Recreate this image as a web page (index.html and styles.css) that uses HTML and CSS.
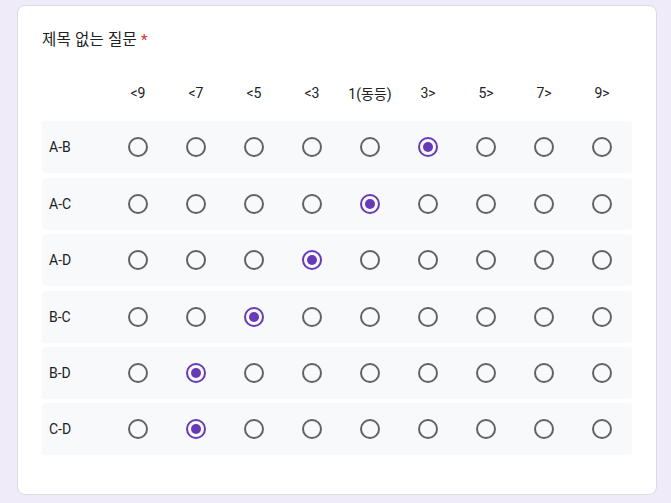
FILE: index.html
```html
<!DOCTYPE html>
<html lang="ko">
<head>
<meta charset="utf-8">
<link rel="stylesheet" href="styles.css">
</head>
<body>
<div class="card">
  <div class="title">제목 없는 질문 <span class="req">*</span></div>
  <div class="grid">
    <div class="head">
      <div class="lab"></div>
      <div class="col">&lt;9</div><div class="col">&lt;7</div><div class="col">&lt;5</div><div class="col">&lt;3</div><div class="col">1(동등)</div><div class="col">3&gt;</div><div class="col">5&gt;</div><div class="col">7&gt;</div><div class="col">9&gt;</div>
    </div>
    <div class="row"><div class="lab">A-B</div>
      <div class="col"><span class="radio"></span></div><div class="col"><span class="radio"></span></div><div class="col"><span class="radio"></span></div><div class="col"><span class="radio"></span></div><div class="col"><span class="radio"></span></div><div class="col"><span class="radio on"></span></div><div class="col"><span class="radio"></span></div><div class="col"><span class="radio"></span></div><div class="col"><span class="radio"></span></div>
    </div>
    <div class="row"><div class="lab">A-C</div>
      <div class="col"><span class="radio"></span></div><div class="col"><span class="radio"></span></div><div class="col"><span class="radio"></span></div><div class="col"><span class="radio"></span></div><div class="col"><span class="radio on"></span></div><div class="col"><span class="radio"></span></div><div class="col"><span class="radio"></span></div><div class="col"><span class="radio"></span></div><div class="col"><span class="radio"></span></div>
    </div>
    <div class="row"><div class="lab">A-D</div>
      <div class="col"><span class="radio"></span></div><div class="col"><span class="radio"></span></div><div class="col"><span class="radio"></span></div><div class="col"><span class="radio on"></span></div><div class="col"><span class="radio"></span></div><div class="col"><span class="radio"></span></div><div class="col"><span class="radio"></span></div><div class="col"><span class="radio"></span></div><div class="col"><span class="radio"></span></div>
    </div>
    <div class="row"><div class="lab">B-C</div>
      <div class="col"><span class="radio"></span></div><div class="col"><span class="radio"></span></div><div class="col"><span class="radio on"></span></div><div class="col"><span class="radio"></span></div><div class="col"><span class="radio"></span></div><div class="col"><span class="radio"></span></div><div class="col"><span class="radio"></span></div><div class="col"><span class="radio"></span></div><div class="col"><span class="radio"></span></div>
    </div>
    <div class="row"><div class="lab">B-D</div>
      <div class="col"><span class="radio"></span></div><div class="col"><span class="radio on"></span></div><div class="col"><span class="radio"></span></div><div class="col"><span class="radio"></span></div><div class="col"><span class="radio"></span></div><div class="col"><span class="radio"></span></div><div class="col"><span class="radio"></span></div><div class="col"><span class="radio"></span></div><div class="col"><span class="radio"></span></div>
    </div>
    <div class="row"><div class="lab">C-D</div>
      <div class="col"><span class="radio"></span></div><div class="col"><span class="radio on"></span></div><div class="col"><span class="radio"></span></div><div class="col"><span class="radio"></span></div><div class="col"><span class="radio"></span></div><div class="col"><span class="radio"></span></div><div class="col"><span class="radio"></span></div><div class="col"><span class="radio"></span></div><div class="col"><span class="radio"></span></div>
    </div>
  </div>
</div>
</body>
</html>
```
FILE: styles.css
```css
html, body {
  margin: 0;
  padding: 0;
  background: #f0ebf8;
}
body {
  padding: 5px 0 0 17px;
  font-family: Roboto, "Noto Sans CJK KR", sans-serif;
  color: #202124;
}
.card {
  box-sizing: border-box;
  width: 640px;
  height: 490px;
  background: #fff;
  border: 1px solid #dadce0;
  border-radius: 8px;
  padding: 22px 24px 0 24px;
}
.title {
  font-size: 15.5px;
  line-height: 24px;
  letter-spacing: 0.2px;
}
.req {
  color: #d93025;
  font-size: 15px;
}
.grid {
  margin-top: 17px;
  display: flex;
  flex-direction: column;
  gap: 4.4px;
}
.head, .row {
  display: grid;
  grid-template-columns: 67px repeat(9, 58px);
  align-items: center;
}
.head {
  height: 48px;
  font-size: 14px;
}
.head .col {
  text-align: center;
}
.row {
  height: 52px;
  background: #f8f9fa;
  border-radius: 4px;
  font-size: 14px;
}
.row .lab {
  padding-left: 7px;
}
.col {
  display: flex;
  justify-content: center;
  align-items: center;
}
.radio {
  box-sizing: border-box;
  width: 20px;
  height: 20px;
  border: 2px solid #5f6368;
  border-radius: 50%;
  display: flex;
  align-items: center;
  justify-content: center;
}
.radio.on {
  border-color: #673ab7;
}
.radio.on::after {
  content: "";
  width: 10px;
  height: 10px;
  border-radius: 50%;
  background: #673ab7;
}
```
